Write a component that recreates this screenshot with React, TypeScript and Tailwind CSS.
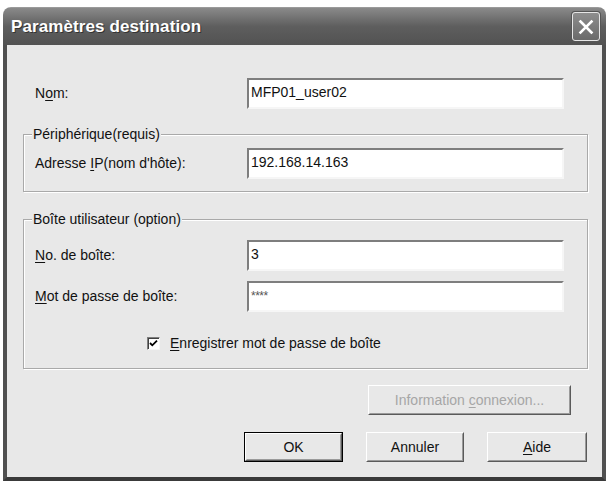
import type { ReactNode } from "react";

const font = "font-['Liberation_Sans','Arial',sans-serif]";

function Field({ value, small }: { value: string; small?: boolean }) {
  return (
    <div className="w-[317px] h-[31px] bg-white border-2 border-t-[#7e7e7e] border-l-[#7e7e7e] border-b-[#f6f6f6] border-r-[#f6f6f6] pl-[2px] pt-[4px] text-[14px] leading-[17px] text-[#111]">
      {small ? <span className="text-[12px] tracking-[-0.5px] text-[#555]">{value}</span> : value}
    </div>
  );
}

function Row({ label, value, small }: { label: ReactNode; value: string; small?: boolean }) {
  return (
    <div className="flex items-center">
      <div className="w-[212px] text-[14px] text-[#111]">{label}</div>
      <Field value={value} small={small} />
    </div>
  );
}

function Group({ title, children, className }: { title: string; children: ReactNode; className?: string }) {
  return (
    <fieldset className={`border border-[#a9a9a9] shadow-[inset_1px_1px_0_#fff,1px_1px_0_#fff] ${className ?? ""}`}>
      <legend className="-ml-[3px] px-[1px] bg-[#e8e8e8] text-[14px] leading-[16px] text-[#111]">{title}</legend>
      {children}
    </fieldset>
  );
}

function Button({ children, width, isDefault, disabled }: { children: ReactNode; width: string; isDefault?: boolean; disabled?: boolean }) {
  return (
    <div className={`${width} h-[30px] flex ${isDefault ? "border border-black" : ""} bg-[#e8e8e8]`}>
      <div className="flex-1 border border-t-white border-l-white border-b-[#5a5a5a] border-r-[#5a5a5a] flex">
        <div
          className={`flex-1 flex items-center justify-center border border-t-[#e8e8e8] border-l-[#e8e8e8] border-b-[#9a9a9a] border-r-[#9a9a9a] text-[14px] ${
            disabled ? "text-[#a6a6a6]" : "text-[#111]"
          }`}
        >
          <span>{children}</span>
        </div>
      </div>
    </div>
  );
}

export default function App() {
  return (
    <div className={`w-[609px] h-[484px] bg-white pt-[7px] pl-[3px] ${font}`}>
      <div className="w-[603px] h-[474px] flex flex-col rounded-t-[8px] overflow-hidden">
        {/* title bar */}
        <div className="h-[38px] shrink-0 flex items-center justify-between pl-[8px] pr-[6px] bg-gradient-to-b from-[#8a8a8a] via-[#5e5e5e] to-[#525252] border-t border-[#9a9a9a]">
          <span className="text-white text-[17px] font-bold pt-[1px] tracking-[0.1px] [text-shadow:1px_1px_0_#333]">
            Paramètres destination
          </span>
          <div className="w-[28px] h-[29px] rounded-[3px] border border-[#e6e6e6] bg-gradient-to-b from-[#8e8e8e] to-[#6a6a6a] flex items-center justify-center shadow-[0_0_0_1px_#555]">
            <svg width="16" height="16" viewBox="0 0 16 16">
              <path d="M2.5 2.5 L13.5 13.5 M13.5 2.5 L2.5 13.5" stroke="#fff" strokeWidth="2.6" strokeLinecap="square" />
            </svg>
          </div>
        </div>

        {/* frame + body */}
        <div className="flex-1 flex border-x-4 border-b-4 border-x-[#505050] border-b-[#3a3a3a]">
          <div className="flex-1 bg-[#e8e8e8] flex flex-col pl-[16px] pr-[14px]">
            <div className="mt-[33px] ml-[12px]">
              <Row label={<>N<u className="underline-offset-2">o</u>m:</>} value="MFP01_user02" />
            </div>

            <Group title="Périphérique(requis)" className="mt-[17px] pt-[6px] pb-[12px] pl-[11px]">
              <Row label={<>Adresse <u className="underline-offset-2">I</u>P(nom d'hôte):</>} value="192.168.14.163" />
            </Group>

            <Group title="Boîte utilisateur (option)" className="mt-[19px] pt-[13px] pb-[14px] pl-[11px]">
              <div className="flex flex-col gap-[10px]">
                <Row label={<><u className="underline-offset-2">N</u>o. de boîte:</>} value="3" />
                <Row label={<><u className="underline-offset-2">M</u>ot de passe de boîte:</>} value="****" small />
              </div>
              <div className="mt-[21px] ml-[112px] flex items-center gap-[10px]">
                <div className="w-[13px] h-[13px] bg-white border border-t-[#7e7e7e] border-l-[#7e7e7e] border-b-[#f6f6f6] border-r-[#f6f6f6] shadow-[inset_1px_1px_0_#404040] flex items-center justify-center">
                  <svg width="9" height="9" viewBox="0 0 9 9">
                    <path d="M1 4 L3.3 6.3 L8 1.6" stroke="#000" strokeWidth="1.8" fill="none" />
                  </svg>
                </div>
                <span className="text-[14px] text-[#111]">
                  <u className="underline-offset-2">E</u>nregistrer mot de passe de boîte
                </span>
              </div>
            </Group>

            <div className="mt-[16px] flex justify-end pr-[17px]">
              <Button width="w-[203px]" disabled>
                Information <u className="underline-offset-2">c</u>onnexion...
              </Button>
            </div>

            <div className="mt-[17px] flex justify-end gap-[23px] pr-[1px]">
              <Button width="w-[99px]" isDefault>
                OK
              </Button>
              <Button width="w-[98px]">Annuler</Button>
              <Button width="w-[100px]">
                <u className="underline-offset-2">A</u>ide
              </Button>
            </div>
          </div>
        </div>
      </div>
    </div>
  );
}
